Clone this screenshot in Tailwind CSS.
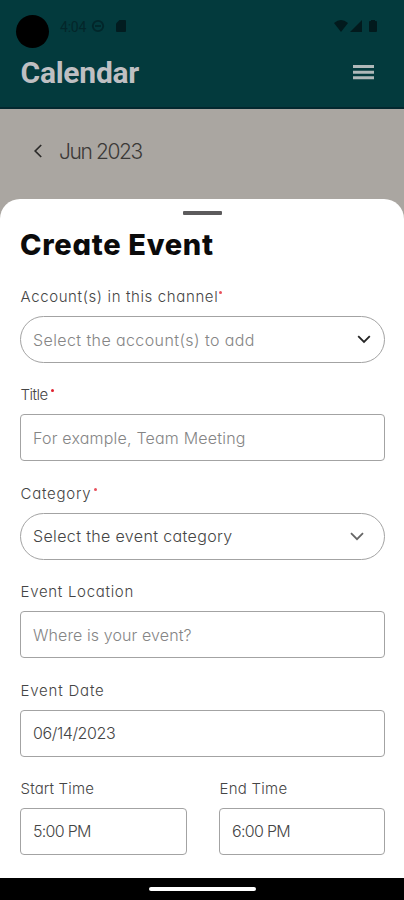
<!DOCTYPE html>
<html lang="en">
<head>
<meta charset="utf-8">
<title>Create Event</title>
<script src="https://cdn.jsdelivr.net/npm/@tailwindcss/browser@4"></script>
</head>
<body class="w-[404px] h-[900px] overflow-hidden bg-[#aaa6a1] font-['Inter',sans-serif] [font-feature-settings:'cv11'] font-light flex flex-col">
  <header class="h-[109px] shrink-0 bg-[#033a3d] border-b-2 border-[#03282f]">
    <div class="h-[48px] pt-[15px] pl-4 pr-[27px] flex items-start">
      <div class="size-[33px] rounded-full bg-black"></div>
      <div class="ml-[11px] mt-[2px] font-['Roboto',sans-serif] font-normal text-[14px] leading-[20px] tracking-[-0.2px] text-[#03262a]">4:04</div>
      <svg class="ml-[5px] mt-[4px] size-[14px]" viewBox="0 0 14 14" fill="none" stroke="#02262a" stroke-width="1.8"><circle cx="7" cy="7" r="5.2"/><path d="M4 7h6"/></svg>
      <svg class="ml-[11px] mt-[5px] w-[10px] h-[12px]" viewBox="0 0 10 12"><path d="M3.5 0H9q1 0 1 1v10q0 1-1 1H1q-1 0-1-1V3.5z" fill="#021c20"/></svg>
      <div class="flex ml-auto mt-[5px] items-start">
        <svg class="w-[14px] h-[12px]" viewBox="0 0 14 12"><path d="M0 3Q7-3 14 3L7 12z" fill="#021a1d"/></svg>
        <svg class="ml-[2px] w-[12px] h-[12px]" viewBox="0 0 12 12"><path d="M12 0v12H0z" fill="#021a1d"/></svg>
        <svg class="ml-[7px] w-[8px] h-[12px]" viewBox="0 0 8 12"><path d="M2 1V0h4v1h1q1 0 1 1v9q0 1-1 1H1q-1 0-1-1V2q0-1 1-1z" fill="#021a1d"/></svg>
      </div>
    </div>
    <div class="flex items-center justify-between pl-[20.5px] pr-[30px] h-[49px]">
      <h1 class="font-['Roboto',sans-serif] font-bold text-[30px] leading-[36px] tracking-[-0.25px] text-[#bfbfc2]">Calendar</h1>
      <svg class="w-[21px] h-[15px]" viewBox="0 0 21 15" fill="#b0b8b9"><path d="M0 0h21v3H0zM0 5.7h21v3H0zM0 11.3h21v3H0z"/></svg>
    </div>
  </header>
  <div class="h-[90px] shrink-0 flex items-start pl-[34px] pt-[28px]">
    <svg class="mt-[7px] w-[8px] h-[14px]" viewBox="0 0 8 14" fill="none" stroke="#2b2a29" stroke-width="1.7"><path d="M7.2 1L1.2 7l6 6"/></svg>
    <div class="ml-[17px] text-[21px] leading-[30px] tracking-[-1.4px] word-spacing-normal text-[#3b3937]">Jun 2023</div>
  </div>
  <main class="h-[679px] shrink-0 bg-white rounded-t-[20px] px-[20px] pt-[12px] flex flex-col">
    <div class="w-[39px] h-[4px] rounded-[1px] bg-[#5c5b5c] ml-[163px] shrink-0"></div>
    <h2 class="mt-[11px] h-[38px] text-[29px] leading-[38px] font-extrabold tracking-[0.7px] text-[#0b0b0b]">Create Event</h2>
    <form class="mt-[20px] text-[16px] text-[#454545]">
      <div class="h-[98.4px]">
        <label class="block h-[32px] pl-[0.5px] leading-[26px] text-[15px] tracking-[0.62px]">Account(s) in this channel<span class="inline-block size-[3px] rounded-full bg-[#e8505c] align-[8px] ml-[1px]"></span></label>
        <div class="h-[47px] w-[365px] border border-[#a3a3a3] rounded-full flex items-center justify-between pl-[12px] pr-[13px] tracking-[0.4px] text-[#858585]">Select the account(s) to add<svg class="w-[14px] h-[9px]" viewBox="0 0 14 9" fill="none" stroke="#242424" stroke-width="1.8"><path d="M1.2 1.2L7 7l5.8-5.8"/></svg></div>
      </div>
      <div class="h-[98.4px]">
        <label class="block h-[32px] pl-[0.5px] leading-[26px] text-[15px] tracking-[-0.5px]">Title<span class="inline-block size-[3px] rounded-full bg-[#e0202e] align-[8px] ml-[3px]"></span></label>
        <div class="h-[47px] w-[365px] border border-[#a3a3a3] rounded-[4px] flex items-center pl-[12px] tracking-[0.2px] text-[#858585]">For example, Team Meeting</div>
      </div>
      <div class="h-[98.4px]">
        <label class="block h-[32px] pl-[0.5px] leading-[26px] text-[15px] tracking-[0.75px]">Category<span class="inline-block size-[3px] rounded-full bg-[#e8505c] align-[8px] ml-[3px]"></span></label>
        <div class="h-[47px] w-[365px] border border-[#a3a3a3] rounded-full flex items-center justify-between pl-[12px] pr-[20px] tracking-[0.36px]">Select the event category<svg class="w-[14px] h-[9px]" viewBox="0 0 14 9" fill="none" stroke="#666" stroke-width="1.8"><path d="M1 1.2L7 7.2l6-6"/></svg></div>
      </div>
      <div class="h-[98.4px]">
        <label class="block h-[32px] pl-[0.5px] leading-[26px] text-[15px] tracking-[0.7px]">Event Location</label>
        <div class="h-[47px] w-[365px] border border-[#a3a3a3] rounded-[4px] flex items-center pl-[12px] tracking-[0.1px] text-[#858585]">Where is your event?</div>
      </div>
      <div class="h-[98.4px]">
        <label class="block h-[32px] pl-[0.5px] leading-[26px] text-[15px] tracking-[0.8px]">Event Date</label>
        <div class="h-[47px] w-[365px] border border-[#a3a3a3] rounded-[4px] flex items-center pl-[12px] tracking-[-0.4px]">06/14/2023</div>
      </div>
      <div class="flex gap-[32px] w-[366px]">
        <div class="w-[167px] shrink-0">
          <label class="block h-[32px] pl-[0.5px] leading-[26px] text-[15px] tracking-[0.15px]">Start Time</label>
          <div class="h-[47px] border border-[#a3a3a3] rounded-[4px] flex items-center pl-[12px] tracking-[-0.7px]">5:00 PM</div>
        </div>
        <div class="w-[166px] shrink-0">
          <label class="block h-[32px] pl-[0.5px] leading-[26px] text-[15px] tracking-[0.25px]">End Time</label>
          <div class="h-[47px] border border-[#a3a3a3] rounded-[4px] flex items-center pl-[12px] tracking-[-0.7px]">6:00 PM</div>
        </div>
      </div>
    </form>
  </main>
  <footer class="flex-1 bg-black flex justify-center pt-[9px]"><div class="w-[107px] h-[4px] rounded-full bg-white"></div></footer>
</body>
</html>
